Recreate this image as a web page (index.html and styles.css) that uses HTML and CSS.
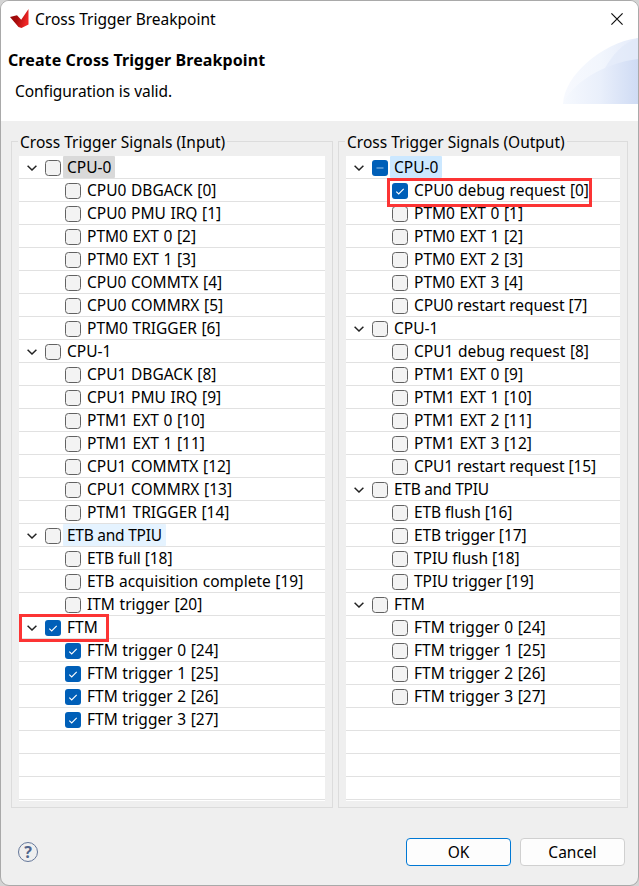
FILE: index.html
```
<!DOCTYPE html>
<html lang="en">
<head>
<meta charset="utf-8">
<title>Cross Trigger Breakpoint</title>
<link rel="stylesheet" href="styles.css">
</head>
<body>
<svg width="0" height="0" class="defs">
  <symbol id="on" viewBox="0 0 16 16"><rect width="16" height="16" rx="3" fill="#005fb8"/><path d="M4.3 8.6l2.4 2.4 5-5.2" fill="none" stroke="#fff" stroke-width="1.1"/></symbol>
  <symbol id="mid" viewBox="0 0 16 16"><rect width="16" height="16" rx="3" fill="#005fb8"/><path d="M4.5 8h7" stroke="#9cc3e6" stroke-width="1.2"/></symbol>
  <symbol id="off" viewBox="0 0 16 16"><rect x=".5" y=".5" width="15" height="15" rx="3" fill="#f3f3f3" stroke="#626262"/></symbol>
  <symbol id="open" viewBox="0 0 10 6"><path d="M.6 .8L5 5 9.4 .8" fill="none" stroke="#222" stroke-width="1.5"/></symbol>
</svg>
<main class="dialog">
  <header class="banner">
    <div class="titlebar">
      <svg class="logo" width="19" height="20" viewBox="0 0 19 20"><defs><linearGradient id="red" x1="0" y1="0" x2="1" y2=".3"><stop offset="0" stop-color="#8c0808"/><stop offset=".5" stop-color="#a80c0c"/><stop offset="1" stop-color="#ee2525"/></linearGradient></defs><path d="M0 8L7 6.3 11.2 10.8 18.5 0V15.5L11.5 19 8.5 18Z" fill="url(#red)"/></svg>
      <span class="caption">Cross Trigger Breakpoint</span>
      <svg class="close" width="12" height="12" viewBox="0 0 12 12"><path d="M.4 .4l11.2 11.2M11.6 .4L.4 11.6" stroke="#111" stroke-width="1.2"/></svg>
    </div>
    <h1>Create Cross Trigger Breakpoint</h1>
    <p>Configuration is valid.</p>
    <svg class="swoosh" width="75" height="66" viewBox="0 0 75 66"><defs><linearGradient id="sky"><stop offset="0" stop-color="#f7f9fe"/><stop offset=".5" stop-color="#f2f6fd"/><stop offset="1" stop-color="#e4ebfa"/></linearGradient><linearGradient id="sky2"><stop offset="0" stop-color="#f6f9fe"/><stop offset=".5" stop-color="#e9effb"/><stop offset="1" stop-color="#cfdbf4"/></linearGradient></defs><path d="M0 66C1 38 38 5 75 0V66Z" fill="url(#sky)"/><path d="M41 32C49 17 60 5 75 0V22Z" fill="#dfe7f9" opacity=".6"/><path d="M0 66C8 46 40 25 75 21V66Z" fill="url(#sky2)"/></svg>
  </header>
  <section class="groups">
    <div class="group input">
      <h2>Cross Trigger Signals (Input)</h2>
      <ul class="tree">
        <li class="top"><svg class="arrow"><use href="#open"/></svg><svg class="box"><use href="#off"/></svg><span class="gray">CPU-0</span></li>
        <li><svg class="box"><use href="#off"/></svg><span>CPU0 DBGACK [0]</span></li>
        <li><svg class="box"><use href="#off"/></svg><span>CPU0 PMU IRQ [1]</span></li>
        <li><svg class="box"><use href="#off"/></svg><span>PTM0 EXT 0 [2]</span></li>
        <li><svg class="box"><use href="#off"/></svg><span>PTM0 EXT 1 [3]</span></li>
        <li><svg class="box"><use href="#off"/></svg><span>CPU0 COMMTX [4]</span></li>
        <li><svg class="box"><use href="#off"/></svg><span>CPU0 COMMRX [5]</span></li>
        <li><svg class="box"><use href="#off"/></svg><span>PTM0 TRIGGER [6]</span></li>
        <li class="top"><svg class="arrow"><use href="#open"/></svg><svg class="box"><use href="#off"/></svg><span>CPU-1</span></li>
        <li><svg class="box"><use href="#off"/></svg><span>CPU1 DBGACK [8]</span></li>
        <li><svg class="box"><use href="#off"/></svg><span>CPU1 PMU IRQ [9]</span></li>
        <li><svg class="box"><use href="#off"/></svg><span>PTM1 EXT 0 [10]</span></li>
        <li><svg class="box"><use href="#off"/></svg><span>PTM1 EXT 1 [11]</span></li>
        <li><svg class="box"><use href="#off"/></svg><span>CPU1 COMMTX [12]</span></li>
        <li><svg class="box"><use href="#off"/></svg><span>CPU1 COMMRX [13]</span></li>
        <li><svg class="box"><use href="#off"/></svg><span>PTM1 TRIGGER [14]</span></li>
        <li class="top"><svg class="arrow"><use href="#open"/></svg><svg class="box"><use href="#off"/></svg><span class="hover tight">ETB and TPIU</span></li>
        <li><svg class="box"><use href="#off"/></svg><span class="tight">ETB full [18]</span></li>
        <li><svg class="box"><use href="#off"/></svg><span>ETB acquisition complete [19]</span></li>
        <li><svg class="box"><use href="#off"/></svg><span>ITM trigger [20]</span></li>
        <li class="top mark-ftm"><svg class="arrow"><use href="#open"/></svg><svg class="box"><use href="#on"/></svg><span>FTM</span></li>
        <li><svg class="box"><use href="#on"/></svg><span>FTM trigger 0 [24]</span></li>
        <li><svg class="box"><use href="#on"/></svg><span>FTM trigger 1 [25]</span></li>
        <li><svg class="box"><use href="#on"/></svg><span>FTM trigger 2 [26]</span></li>
        <li><svg class="box"><use href="#on"/></svg><span>FTM trigger 3 [27]</span></li>
        <li></li>
        <li></li>
        <li></li>
      </ul>
    </div>
    <div class="group output">
      <h2>Cross Trigger Signals (Output)</h2>
      <ul class="tree">
        <li class="top"><svg class="arrow"><use href="#open"/></svg><svg class="box"><use href="#mid"/></svg><span class="blue">CPU-0</span></li>
        <li class="mark-request"><svg class="box"><use href="#on"/></svg><span>CPU0 debug request [0]</span></li>
        <li><svg class="box"><use href="#off"/></svg><span>PTM0 EXT 0 [1]</span></li>
        <li><svg class="box"><use href="#off"/></svg><span>PTM0 EXT 1 [2]</span></li>
        <li><svg class="box"><use href="#off"/></svg><span>PTM0 EXT 2 [3]</span></li>
        <li><svg class="box"><use href="#off"/></svg><span>PTM0 EXT 3 [4]</span></li>
        <li><svg class="box"><use href="#off"/></svg><span class="tight">CPU0 restart request [7]</span></li>
        <li class="top"><svg class="arrow"><use href="#open"/></svg><svg class="box"><use href="#off"/></svg><span>CPU-1</span></li>
        <li><svg class="box"><use href="#off"/></svg><span>CPU1 debug request [8]</span></li>
        <li><svg class="box"><use href="#off"/></svg><span>PTM1 EXT 0 [9]</span></li>
        <li><svg class="box"><use href="#off"/></svg><span>PTM1 EXT 1 [10]</span></li>
        <li><svg class="box"><use href="#off"/></svg><span>PTM1 EXT 2 [11]</span></li>
        <li><svg class="box"><use href="#off"/></svg><span>PTM1 EXT 3 [12]</span></li>
        <li><svg class="box"><use href="#off"/></svg><span class="tight">CPU1 restart request [15]</span></li>
        <li class="top"><svg class="arrow"><use href="#open"/></svg><svg class="box"><use href="#off"/></svg><span class="tight">ETB and TPIU</span></li>
        <li><svg class="box"><use href="#off"/></svg><span class="tight">ETB flush [16]</span></li>
        <li><svg class="box"><use href="#off"/></svg><span class="tight">ETB trigger [17]</span></li>
        <li><svg class="box"><use href="#off"/></svg><span class="tight">TPIU flush [18]</span></li>
        <li><svg class="box"><use href="#off"/></svg><span class="tight">TPIU trigger [19]</span></li>
        <li class="top"><svg class="arrow"><use href="#open"/></svg><svg class="box"><use href="#off"/></svg><span>FTM</span></li>
        <li><svg class="box"><use href="#off"/></svg><span>FTM trigger 0 [24]</span></li>
        <li><svg class="box"><use href="#off"/></svg><span>FTM trigger 1 [25]</span></li>
        <li><svg class="box"><use href="#off"/></svg><span>FTM trigger 2 [26]</span></li>
        <li><svg class="box"><use href="#off"/></svg><span>FTM trigger 3 [27]</span></li>
        <li></li>
        <li></li>
        <li></li>
        <li></li>
      </ul>
    </div>
  </section>
  <footer class="actions">
    <span class="help">?</span>
    <button class="ok">OK</button>
    <button>Cancel</button>
  </footer>
</main>
</body>
</html>
```
FILE: styles.css
```
*, *::after { box-sizing: border-box; }
body {
  margin: 0;
  height: 886px;
  background: #d4d4d4;
  font: 15.5px/22px "Noto Sans", "Open Sans", sans-serif;
  color: #000;
  overflow: hidden;
}
.defs { position: absolute; }
.dialog {
  height: 886px;
  border: 1px solid #a9a9a9;
  border-radius: 9px;
  background: #efefef;
  overflow: hidden;
}
.banner {
  position: relative;
  height: 120px;
  background: #fff;
}
.titlebar {
  display: flex;
  align-items: center;
  height: 36px;
  padding: 0 15px 0 9px;
}
.caption { flex: 1; margin-left: 6px; }
h1 {
  margin: 12px 0 0 7px;
  font-size: 16px;
  line-height: 22px;
  letter-spacing: .09px;
}
.banner p { margin: 9px 0 0 14px; letter-spacing: -.05px; }
.swoosh { position: absolute; right: 0; top: 37px; }
.groups {
  display: flex;
  gap: 5px;
  padding: 20px 10px 0;
}
.group {
  height: 667px;
  padding: 0 7px;
  border: 1px solid #dcdcdc;
}
.input { width: 322px; }
.output { width: 290px; }
h2 {
  width: max-content;
  height: 22px;
  margin: -11px 0 3px -1px;
  padding: 0 2px;
  background: #efefef;
  font-size: inherit;
  font-weight: 400;
}
.tree {
  height: 645px;
  margin: 0;
  padding: 0;
  list-style: none;
  background: #fff;
}
.input .tree { width: 306px; }
.output .tree { width: 274px; }
.tree li {
  position: relative;
  display: flex;
  height: 23px;
  padding-left: 46px;
  border-bottom: 1px solid #e1e1e1;
  white-space: nowrap;
}
.tree .top { padding-left: 8px; }
.arrow { width: 10px; height: 6px; margin: 9px 8px 0 0; }
.box { width: 16px; height: 16px; margin: 4px 2px 0 0; }
.tree span { padding: 0 4px; border-radius: 1px; word-spacing: .6px; }
.tree .tight { word-spacing: 0; letter-spacing: -.06px; }
.tree .top .tight { letter-spacing: -.25px; }
.gray { background: #d9d9d9; }
.blue { background: #cce8ff; }
.hover { background: #e5f3ff; }
.mark-ftm::after, .mark-request::after {
  content: "";
  position: absolute;
  z-index: 1;
  border: 3px solid #fc3434;
}
.mark-ftm::after { left: 0; top: -2px; width: 90px; height: 28px; }
.mark-request::after { left: 41px; top: -1px; width: 205px; height: 29px; }
.actions {
  display: flex;
  align-items: center;
  gap: 9px;
  height: 28px;
  margin: 30px 13px 0 17px;
}
.help {
  width: 20px;
  height: 20px;
  margin: -1px auto 0 0;
  border: 1px solid #64779a;
  border-radius: 50%;
  color: #50658c;
  font-weight: 700;
  font-size: 16px;
  line-height: 18px;
  text-align: center;
}
button {
  width: 105px;
  height: 28px;
  padding: 0;
  border: 1px solid #d0d0d0;
  border-radius: 4px;
  background: #fdfdfd;
  color: #000;
  font: inherit;
}
.ok { border-color: #0078d4; }
```
